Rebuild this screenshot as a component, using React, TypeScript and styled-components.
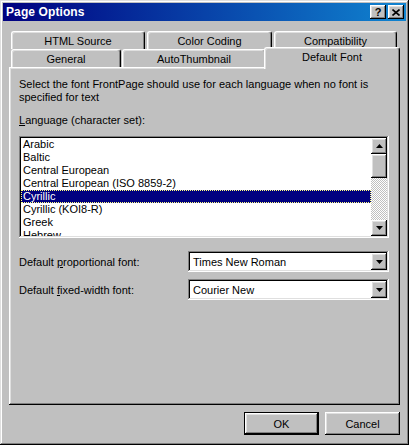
import React from "react";
import styled, { createGlobalStyle } from "styled-components";

const Global = createGlobalStyle`
  html, body { margin: 0; padding: 0; background: #c0c0c0; }
  body { font-family: "Liberation Sans", Arial, sans-serif; font-size: 11px; color: #000; }
`;

const raised = `
  box-shadow: inset -1px -1px #000, inset 1px 1px #fff, inset -2px -2px #808080, inset 2px 2px #dfdfdf;
`;
const sunken = `
  box-shadow: inset -1px -1px #fff, inset 1px 1px #808080, inset -2px -2px #dfdfdf, inset 2px 2px #000;
`;

const Window = styled.div`
  width: 409px;
  height: 445px;
  box-sizing: border-box;
  padding: 3px;
  background: #c0c0c0;
  box-shadow: inset -1px -1px #000, inset 1px 1px #dfdfdf, inset -2px -2px #808080, inset 2px 2px #fff;
  display: flex;
  flex-direction: column;
`;

const TitleBar = styled.div`
  height: 18px;
  display: flex;
  align-items: center;
  padding: 0 2px 0 3px;
  background: linear-gradient(to right, #000080, #1084d0);
  color: #fff;
`;

const TitleText = styled.div`
  flex: 1;
  font-weight: bold;
  font-size: 12px;
  letter-spacing: 0.1px;
`;

const TitleButton = styled.div`
  width: 16px;
  height: 14px;
  box-sizing: border-box;
  background: #c0c0c0;
  ${raised}
  display: flex;
  align-items: center;
  justify-content: center;
  color: #000;
  font-weight: bold;
  font-size: 11px;
  & + & { margin-left: 2px; }
`;

const Body = styled.div`
  flex: 1;
  display: flex;
  flex-direction: column;
  padding: 10px 6px 0 6px;
`;

const TabStrip = styled.div`
  display: flex;
  flex-direction: column;
`;

const TabRow = styled.div<{ $gap: number }>`
  display: flex;
  height: 18px;
  padding-left: 2px;
  gap: ${(p) => p.$gap}px;
`;

const Tab = styled.div<{ $w: number; $active?: boolean; $shift?: number }>`
  width: ${(p) => p.$w}px;
  height: ${(p) => (p.$active ? 22 : 18)}px;
  margin-top: ${(p) => (p.$active ? -2 : 0)}px;
  margin-left: ${(p) => p.$shift ?? 0}px;
  box-sizing: border-box;
  border-top: 1px solid #fff;
  border-left: 1px solid #fff;
  border-right: 1px solid #000;
  border-radius: 3px 3px 0 0;
  box-shadow: inset -1px 0 #808080, inset 1px 1px #dfdfdf;
  background: #c0c0c0;
  display: flex;
  align-items: ${(p) => (p.$active ? "flex-start" : "center")};
  padding-top: ${(p) => (p.$active ? 3 : 0)}px;
  justify-content: center;
  position: relative;
  z-index: ${(p) => (p.$active ? 2 : 0)};
  white-space: nowrap;
`;

const Panel = styled.div`
  height: 338px;
  box-sizing: border-box;
  ${raised}
  padding: 11px 11px 0 10px;
  display: flex;
  flex-direction: column;
`;

const Para = styled.div`
  line-height: 13px;
`;

const Label = styled.div<{ $mt?: number }>`
  line-height: 13px;
  margin-top: ${(p) => p.$mt ?? 0}px;
  u { text-decoration: underline; text-underline-offset: 1px; }
`;

const ListBox = styled.div`
  margin-top: 9px;
  height: 102px;
  box-sizing: border-box;
  padding: 2px;
  background: #fff;
  ${sunken}
  display: flex;
`;

const ListItems = styled.div`
  flex: 1;
  overflow: hidden;
`;

const ListItem = styled.div<{ $sel?: boolean }>`
  height: 13px;
  line-height: 13px;
  padding-left: 2px;
  box-sizing: border-box;
  white-space: nowrap;
  background: ${(p) => (p.$sel ? "#000080" : "transparent")};
  color: ${(p) => (p.$sel ? "#fff" : "#000")};
  outline: ${(p) => (p.$sel ? "1px dotted #ffff80" : "none")};
  outline-offset: -1px;
`;

const ScrollBar = styled.div`
  width: 16px;
  display: flex;
  flex-direction: column;
`;

const ScrollButton = styled.div`
  width: 16px;
  height: 16px;
  box-sizing: border-box;
  background: #c0c0c0;
  ${raised}
  display: flex;
  align-items: center;
  justify-content: center;
  flex-shrink: 0;
`;

const Thumb = styled.div`
  width: 16px;
  height: 24px;
  box-sizing: border-box;
  background: #c0c0c0;
  ${raised}
  flex-shrink: 0;
`;

const Track = styled.div`
  flex: 1;
  background-color: #fff;
  background-image: conic-gradient(#c0c0c0 25%, #fff 0 50%, #c0c0c0 0 75%, #fff 0);
  background-size: 2px 2px;
`;

const FieldRow = styled.div<{ $mt: number }>`
  display: flex;
  align-items: center;
  margin-top: ${(p) => p.$mt}px;
  height: 21px;
`;

const FieldLabel = styled.div`
  width: 169px;
  u { text-decoration: underline; text-underline-offset: 1px; }
`;

const Combo = styled.div`
  flex: 1;
  height: 21px;
  box-sizing: border-box;
  padding: 2px;
  background: #fff;
  ${sunken}
  display: flex;
  align-items: center;
`;

const ComboText = styled.div`
  flex: 1;
  padding-left: 3px;
`;

const DropButton = styled.div`
  width: 16px;
  height: 17px;
  box-sizing: border-box;
  background: #c0c0c0;
  ${raised}
  display: flex;
  align-items: center;
  justify-content: center;
`;

const ButtonRow = styled.div`
  display: flex;
  justify-content: flex-end;
  gap: 6px;
  margin-top: 7px;
`;

const PushButton = styled.div<{ $default?: boolean }>`
  width: 75px;
  height: 23px;
  box-sizing: border-box;
  background: #c0c0c0;
  display: flex;
  align-items: center;
  justify-content: center;
  ${(p) =>
    p.$default
      ? `border: 1px solid #000; box-shadow: inset -1px -1px #000, inset 1px 1px #fff, inset -2px -2px #808080, inset 2px 2px #dfdfdf;`
      : raised}
`;

const Arrow = ({ up }: { up?: boolean }) => (
  <svg width="7" height="4" viewBox="0 0 7 4">
    <path d={up ? "M3.5 0 L7 4 L0 4 Z" : "M0 0 L7 0 L3.5 4 Z"} fill="#000" />
  </svg>
);

const CloseGlyph = () => (
  <svg width="8" height="7" viewBox="0 0 8 7">
    <path d="M0.5 0.5 L7.5 6.5 M7.5 0.5 L0.5 6.5" stroke="#000" strokeWidth="1.6" />
  </svg>
);

const languages = [
  "Arabic",
  "Baltic",
  "Central European",
  "Central European (ISO 8859-2)",
  "Cyrillic",
  "Cyrillic (KOI8-R)",
  "Greek",
  "Hebrew",
];

export default function App() {
  return (
    <>
      <Global />
      <Window>
        <TitleBar>
          <TitleText>Page Options</TitleText>
          <TitleButton>?</TitleButton>
          <TitleButton>
            <CloseGlyph />
          </TitleButton>
        </TitleBar>
        <Body>
          <TabStrip>
            <TabRow $gap={2}>
              <Tab $w={134}>HTML Source</Tab>
              <Tab $w={125}>Color Coding</Tab>
              <Tab $w={123}>Compatibility</Tab>
            </TabRow>
            <TabRow $gap={0}>
              <Tab $w={110}>General</Tab>
              <Tab $w={144} $shift={1}>AutoThumbnail</Tab>
              <Tab $w={136} $shift={-2} $active>
                Default Font
              </Tab>
            </TabRow>
          </TabStrip>
          <Panel>
            <Para>
              Select the font FrontPage should use for each language when no font is
              <br />
              specified for text
            </Para>
            <Label $mt={10}>
              <u>L</u>anguage (character set):
            </Label>
            <ListBox>
              <ListItems>
                {languages.map((l) => (
                  <ListItem key={l} $sel={l === "Cyrillic"}>
                    {l}
                  </ListItem>
                ))}
              </ListItems>
              <ScrollBar>
                <ScrollButton>
                  <Arrow up />
                </ScrollButton>
                <Thumb />
                <Track />
                <ScrollButton>
                  <Arrow />
                </ScrollButton>
              </ScrollBar>
            </ListBox>
            <FieldRow $mt={13}>
              <FieldLabel>
                Default <u>p</u>roportional font:
              </FieldLabel>
              <Combo>
                <ComboText>Times New Roman</ComboText>
                <DropButton>
                  <Arrow />
                </DropButton>
              </Combo>
            </FieldRow>
            <FieldRow $mt={7}>
              <FieldLabel>
                Default <u>f</u>ixed-width font:
              </FieldLabel>
              <Combo>
                <ComboText>Courier New</ComboText>
                <DropButton>
                  <Arrow />
                </DropButton>
              </Combo>
            </FieldRow>
          </Panel>
          <ButtonRow>
            <PushButton $default>OK</PushButton>
            <PushButton>Cancel</PushButton>
          </ButtonRow>
        </Body>
      </Window>
    </>
  );
}
